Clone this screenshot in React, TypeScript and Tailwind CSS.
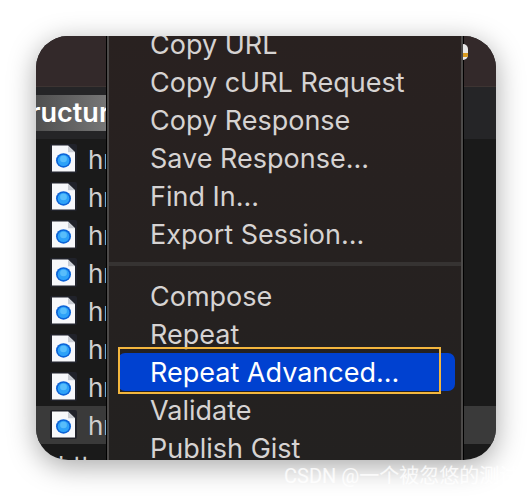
import React from "react";

const topItems = ["Copy cURL Request", "Copy Response", "Save Response...", "Find In...", "Export Session..."];
const rowStates = [false, false, false, false, false, false, false, true];

const FileIcon = () => (
  <svg width="27" height="29" viewBox="0 0 27 30" preserveAspectRatio="none" className="shrink-0 -mt-[2px]">
    <rect x="0" y="0" width="27" height="30" rx="2" fill="#20222a" />
    <path d="M2 1.5h16l7 7V28.5H2z" fill="#f7f8fb" />
    <path d="M18 1.5l7 7h-7z" fill="#c9ccd3" />
    <circle cx="13.5" cy="17" r="7.5" fill="#0b63d8" />
    <circle cx="13.5" cy="17" r="5.8" fill="#2ea2f8" />
    <circle cx="13.5" cy="15.6" r="3.4" fill="#58bdfb" />
  </svg>
);

const MenuItem = ({ label }: { label: string }) => (
  <div className="h-[38px] pl-[41px] flex items-center text-[27px] leading-none text-[#d6d3d2] whitespace-nowrap">{label}</div>
);

const App = () => {
  return (
    <div className="relative w-[532px] h-[496px] bg-white p-[36px] overflow-hidden font-['Inter','Noto_Sans_CJK_SC',sans-serif]">
      {/* window */}
      <div className="relative w-[460px] h-[424px] rounded-[32px] shadow-[0_6px_28px_rgba(0,0,0,0.35)]">
        <div className="w-full h-full rounded-[32px] overflow-hidden bg-[#1a1a1a] relative">
          <div className="h-[50px] bg-[#33292a]" />
          <div className="h-px bg-[#3d3432]" />
          <div className="h-[52px] bg-[#252527] flex flex-col justify-center">
            <div className="h-[36px] w-[72px] overflow-hidden flex justify-end items-center bg-gradient-to-r from-[#505050] to-[#777777]">
              <span className="text-[27px] font-semibold text-white whitespace-nowrap -mr-[17px]">Structure</span>
            </div>
          </div>
          <div className="pt-px">
            {rowStates.map((selected, i) => (
              <div key={i} className={`h-[38px] pl-[14px] flex items-center gap-[11px] ${selected ? "bg-[#3a3a3a]" : "bg-[#1a1a1a]"}`}>
                <FileIcon />
                <span className="text-[26px] text-[#cfcfcf] leading-none pt-[1px]">hr</span>
              </div>
            ))}
          </div>
          <div className="pl-[22px] text-[26px] leading-[26px] text-[#cfcfcf] pt-[9px]">https</div>

          {/* context menu */}
          <div className="absolute left-[71px] top-0 bottom-0 w-[356px] border-l-2 border-r-2 border-l-[#4c4a49] border-r-[#4c4a49] outline-1 outline-black bg-gradient-to-b from-[#292120] to-[#232120] overflow-hidden">
            <div className="-mt-[11px]">
              <MenuItem label="Copy URL" />
              {topItems.map((label) => (
                <MenuItem key={label} label={label} />
              ))}
              <div className="h-[4px] mt-[9px] mb-[11px] bg-[#363332]" />
              <MenuItem label="Compose" />
              <MenuItem label="Repeat" />
              <div className="h-[38px] ml-[9px] mr-[6px] pl-[32px] flex items-center rounded-[7px] bg-[#0041d0] text-[27px] leading-none text-white whitespace-nowrap">
                Repeat Advanced...
              </div>
              <MenuItem label="Validate" />
              <MenuItem label="Publish Gist" />
            </div>
          </div>

          {/* small badge peeking past the menu */}
          <div className="absolute left-[427px] top-[8px] w-[5px] h-[16px] rounded-r-full bg-[#e8e8e8] overflow-hidden">
            <div className="mt-[9px] h-[4px] bg-[#d89a20]" />
          </div>

          {/* annotation box */}
          <div className="absolute left-[82px] top-[311px] w-[323px] h-[47px] border-2 border-[#f3b63e]" />
        </div>
      </div>
      <div className="absolute left-[284px] top-[464px] text-[20px] leading-[24px] text-white/80 whitespace-nowrap font-['Roboto','Noto_Sans_CJK_SC',sans-serif]">CSDN @一个被忽悠的测试</div>
    </div>
  );
};

export default App;
